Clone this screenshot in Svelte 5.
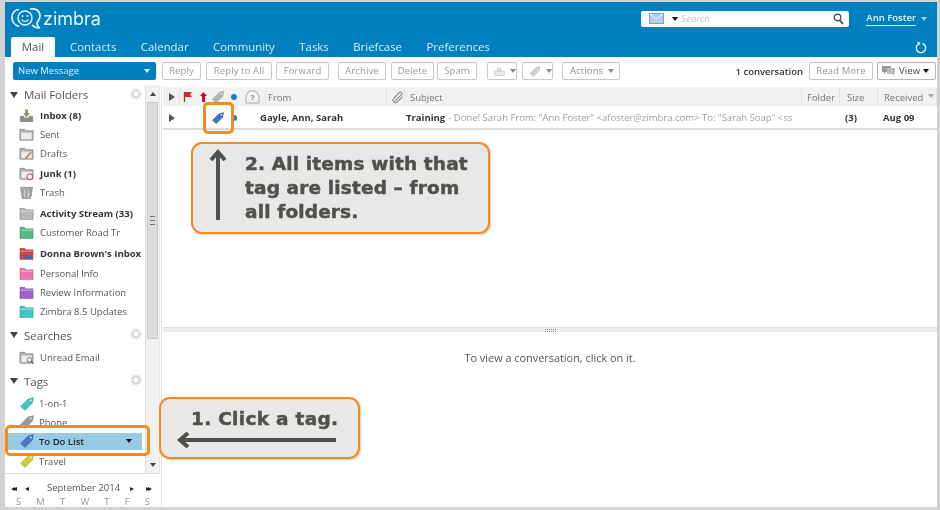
<script>
  const folders = [
    { n: 'Inbox (8)', k: 'inbox', b: true },
    { n: 'Sent', k: 'sent' },
    { n: 'Drafts', k: 'drafts' },
    { n: 'Junk (1)', k: 'junk', b: true },
    { n: 'Trash', k: 'trash' },
    { n: 'Activity Stream (33)', k: 'folder', c: '#b9b9b9', b: true, gap: true },
    { n: 'Customer Road Tr', k: 'folder', c: '#55b98a' },
    { n: "Donna Brown's Inbox", k: 'shared', b: true, gap: true },
    { n: 'Personal Info', k: 'folder', c: '#f070b8' },
    { n: 'Review Information', k: 'folder', c: '#9a62c8' },
    { n: 'Zimbra 8.5 Updates', k: 'folder', c: '#3cc8c8' }
  ];
  const tabs = ['Contacts', 'Calendar', 'Community', 'Tasks', 'Briefcase', 'Preferences'];
  const group1 = [{ t: 'Reply', w: 39, g: 5 }, { t: 'Reply to All', w: 66, g: 4 }, { t: 'Forward', w: 53, g: 9 }];
  const group2 = [{ t: 'Archive', w: 48, g: 5 }, { t: 'Delete', w: 43, g: 3 }, { t: 'Spam', w: 40, g: 10 }];
  const days = ['S', 'M', 'T', 'W', 'T', 'F', 'S'];
</script>

{#snippet tag(color, size = 16)}
  <svg class="ico" width={size} height={size} viewBox="0 0 16 16">
    <path d="M1.500 10.500 9 3l5.500-1.500L13.500 7 6 14.500Z" fill={color} stroke="#00000040" stroke-width=".7" stroke-linejoin="round" />
    <circle cx="11.800" cy="4.300" r=".9" fill="#fff" />
  </svg>
{/snippet}

{#snippet gear()}
  <svg class="gear" width="12" height="12" viewBox="0 0 12 12">
    <circle cx="6" cy="6" r="3.400" fill="none" stroke="#d6d6d6" stroke-width="2" />
    <circle cx="6" cy="6" r="5" fill="none" stroke="#d6d6d6" stroke-width="1.400" stroke-dasharray="1.600 1.600" />
  </svg>
{/snippet}

{#snippet folderIcon(item)}
  <svg class="ico" width="15" height="15" viewBox="0 0 16 16">
    {#if item.k === 'folder' || item.k === 'shared'}
      <path d="M1 2.500h5l1 1.500h8v10.500H1Z" fill={item.k === 'shared' ? '#d8433f' : item.c} stroke="#0000004d" stroke-width=".8" />
      <path d="M1.400 5.500h13.200" stroke="#ffffff80" stroke-width="1" />
      {#if item.k === 'shared'}
        <circle cx="7" cy="11.500" r="2.200" fill="#3a62d0" /><circle cx="12" cy="12" r="2.200" fill="#3a62d0" />
      {/if}
    {:else if item.k === 'inbox'}
      <path d="M1.500 9h3.500l1 2h4l1-2h3.500v5.500H1.500Z" fill="#8c8c8c" stroke="#666" stroke-width=".6" />
      <path d="M6.500 1.500h3v4h2L8 10 4.500 5.500h2Z" fill="#7b9c62" />
    {:else if item.k === 'trash'}
      <path d="M1.500 2.500h13l-2 12h-9Z" fill="#a8a8a8" stroke="#777" stroke-width=".6" />
      <path d="M6 5v8M10 5v8" stroke="#d8d8d8" />
    {:else}
      <path d="M1 2.500h5l1 1.500h8v10H1Z" fill="#b5b5b5" stroke="#777" stroke-width=".7" />
      <path d="M2.500 6h11v7h-11Z" fill="#ededed" />
      {#if item.k === 'drafts'}
        <path d="M6 13l6-7 1.500 1.200-6 7Z" fill="#b49336" />
      {:else if item.k === 'junk'}
        <circle cx="11.500" cy="11.500" r="3" fill="#fff" stroke="#c9565c" stroke-width="1.200" />
      {:else if item.k === 'search'}
        <circle cx="11" cy="10.500" r="2.400" fill="#fff" stroke="#666" /><path d="M13 12.500l2 2" stroke="#555" stroke-width="1.200" />
      {/if}
    {/if}
  </svg>
{/snippet}

<div class="shot">
  <div class="app">
    <header class="top">
      <div class="brand">
        <svg class="logo" width="31" height="21" viewBox="0 0 31 21">
          <circle cx="14" cy="10" r="7" fill="none" stroke="#e8f4fb" stroke-width="1.500" />
          <path d="M8 1.500C4 1.500 1 5 1 9.500s3 8 7 9M19 1c6-1 10 2 10 7 0 3-2 5-3 7 0 2 1 4 3 5-4 0-6-1-8-3" fill="none" stroke="#e8f4fb" stroke-width="1.700" />
          <circle cx="11.500" cy="8" r="1.100" fill="#e8f4fb" /><circle cx="16.500" cy="8" r="1.100" fill="#e8f4fb" />
          <path d="M10.500 11.500c1.500 2.500 5.500 2.500 7 0" fill="none" stroke="#e8f4fb" stroke-width="1.300" />
        </svg>
        <span class="wordmark">zimbra</span>
        <div class="grow"></div>
        <div class="search">
          <svg width="15" height="11" viewBox="0 0 15 11"><rect x=".5" y=".5" width="14" height="10" fill="#b3cdea" stroke="#7f9fc8" /><path d="M1 1l6.500 5L14 1" fill="none" stroke="#fff" /></svg>
          <i class="caret dark"></i>
          <span class="ph">Search</span>
          <div class="grow"></div>
          <svg width="11" height="12" viewBox="0 0 11 12"><circle cx="4.500" cy="4.500" r="3.300" fill="none" stroke="#444" stroke-width="1.300" /><path d="M7 7.500l3 3.500" stroke="#444" stroke-width="1.700" /></svg>
        </div>
        <span class="user">Ann Foster</span>
        <i class="caret light"></i>
      </div>
      <nav class="tabs">
        <span class="tab active">Mail</span>
        {#each tabs as t}<span class="tab">{t}</span>{/each}
        <div class="grow"></div>
        <svg class="refresh" width="12" height="13" viewBox="0 0 12 13"><path d="M7.500 2.500a4.700 4.700 0 1 1-4.200.6" fill="none" stroke="#e8f4fb" stroke-width="1.400" /><path d="M2 .8l3.600.6-1.600 3Z" fill="#e8f4fb" /></svg>
      </nav>
    </header>

    <div class="toolbar">
      <div class="new">New Message<i class="caret light"></i></div>
      {#each group1 as b}<span class="btn text" style="width: {b.w}px; margin-right: {b.g}px">{b.t}</span>{/each}
      {#each group2 as b}<span class="btn text" style="width: {b.w}px; margin-right: {b.g}px">{b.t}</span>{/each}
      <span class="btn icon first">
        <svg width="15" height="13" viewBox="0 0 15 13"><path d="M1 6h13v6H1ZM5 6V2h4l1 4" fill="#eee" stroke="#bbb" /></svg><i class="caret gray"></i>
      </span>
      <span class="btn icon">{@render tag('#cfcfcf', 15)}<i class="caret gray"></i></span>
      <span class="btn actions">Actions<i class="caret gray"></i></span>
      <div class="grow"></div>
      <span class="count">1 conversation</span>
      <span class="btn more">Read More</span>
      <span class="btn view">
        <svg width="15" height="12" viewBox="0 0 15 12"><path d="M1 1h9v6H5L3 9V7H1Z" fill="#999" /><path d="M6 3h8v6h-1v2l-2-2H6Z" fill="#bbb" /></svg>
        <span>View</span><i class="caret dark"></i>
      </span>
    </div>

    <div class="main">
      <aside class="side">
        <div class="tree">
          <div class="scrollarea">
            <div class="sec first"><i class="tri"></i>Mail Folders{@render gear()}</div>
            <div class="rows">
              {#each folders as f}
                <div class="row" class:gap={f.gap} class:bold={f.b}>{@render folderIcon(f)}<span>{f.n}</span></div>
              {/each}
            </div>
            <div class="sec s-search"><i class="tri"></i>Searches{@render gear()}</div>
            <div class="row unread">{@render folderIcon({ k: 'search' })}<span>Unread Email</span></div>
            <div class="sec s-tags"><i class="tri"></i>Tags{@render gear()}</div>
            <div class="row tight tagrow">{@render tag('#3fc4c4')}<span>1-on-1</span></div>
            <div class="row tagrow phone">{@render tag('#9a9a9a')}<span>Phone</span></div>
            <div class="row tagrow sel">{@render tag('#4a78c8')}<span>To Do List</span><i class="caret dark"></i></div>
            <div class="row tagrow">{@render tag('#cfcf3c')}<span>Travel</span></div>
          </div>
          <div class="vbar">
            <div class="arrow up"></div>
            <div class="thumb"><b></b></div>
            <div class="grow"></div>
            <div class="arrow down"></div>
          </div>
        </div>
        <div class="cal">
          <div class="month">
            <span class="nav n1">◂◂</span><span class="nav n2">◂</span>
            <span class="mname">September 2014</span>
            <span class="nav n3">▸</span><span class="nav n4">▸▸</span>
          </div>
          <div class="days">{#each days as d}<span>{d}</span>{/each}</div>
        </div>
      </aside>

      <section class="content">
        <div class="list">
          <div class="thead">
            <span class="c c-exp"><i class="tri right"></i></span>
            <span class="c c-flag">
              <svg width="10" height="12" viewBox="0 0 10 12"><path d="M1.500 1v10" stroke="#b22" stroke-width="1.300" /><path d="M2 1h7L7 3.500 9 6H2Z" fill="#d4282c" /></svg>
            </span>
            <span class="c c-pri">
              <svg width="7" height="10" viewBox="0 0 7 10"><path d="M3.500 0 7 4H5v6H2V4H0Z" fill="#c8102e" /></svg>
            </span>
            <span class="c c-tag">{@render tag('#b5b5b5', 14)}</span>
            <span class="c c-dot"><i class="dot"></i></span>
            <span class="c c-stat">
              <svg width="15" height="14" viewBox="0 0 15 14"><path d="M1 6l3-5h7l3 5v7H1Z" fill="#f4f4f4" stroke="#aaa" /><text x="7.500" y="10" text-anchor="middle" font-size="8" font-family="Liberation Sans" font-weight="700" fill="#888">?</text></svg>
            </span>
            <span class="c c-from">From</span>
            <span class="c c-att">
              <svg width="12" height="13" viewBox="0 0 13 13"><path d="M3 10.500 10.500 3.200a1.700 1.700 0 0 0-2.500-2.200L1.800 7.500a2.700 2.700 0 0 0 3.800 3.800L11.500 5.500" fill="none" stroke="#8d8d8d" stroke-width="1.300" /></svg>
            </span>
            <span class="c c-subj">Subject</span>
            <span class="c c-folder">Folder</span>
            <span class="c c-size">Size</span>
            <span class="c c-recv">Received<i class="sort"></i></span>
          </div>
          <div class="trow">
            <span class="c c-exp"><i class="tri right"></i></span>
            <span class="c c-flag"></span>
            <span class="c c-pri"></span>
            <span class="c c-tag">{@render tag('#3f73c8', 14)}</span>
            <span class="c c-dot"><i class="dot"></i></span>
            <span class="c c-stat"></span>
            <span class="c c-from strong">Gayle, Ann, Sarah</span>
            <span class="c c-att"></span>
            <span class="c c-subj msg"><b>Training</b> <em>- Done! Sarah From: "Ann Foster" &lt;afoster@zimbra.com&gt; To: "Sarah Soap" &lt;ss</em></span>
            <span class="c c-folder"></span>
            <span class="c c-size strong">(3)</span>
            <span class="c c-recv strong">Aug 09</span>
          </div>
        </div>
        <div class="sash"><span></span></div>
        <div class="reading">To view a conversation, click on it.</div>
      </section>
    </div>
  </div>

  <div class="hl hl-tag"></div>
  <div class="hl hl-side"></div>

  <div class="callout c-two">
    <svg class="up-arrow" width="18" height="74" viewBox="0 0 18 74"><path d="M9 5v67" fill="none" stroke="#50524a" stroke-width="4" /><path d="M2 12 9 4l7 8" fill="none" stroke="#50524a" stroke-width="4" /></svg>
    <p>2. All items with that tag are listed – from all folders.</p>
  </div>

  <div class="callout c-one">
    <p>1. Click a tag.</p>
    <svg class="left-arrow" width="162" height="18" viewBox="0 0 162 18"><path d="M160 9H5" fill="none" stroke="#50524a" stroke-width="4" /><path d="M12 2 4 9l8 7" fill="none" stroke="#50524a" stroke-width="4" /></svg>
  </div>
</div>

<style>
  :global(body) { margin: 0; background: #fff; }
  .shot { position: relative; width: 940px; height: 510px; overflow: hidden; background: #d2d2d2; padding: 2px 3px 3px 5px; box-sizing: border-box; font-family: "Open Sans", "Noto Sans", sans-serif; font-size: 10px; color: #444; filter: blur(.3px); }
  .app { height: 100%; background: #fff; display: flex; flex-direction: column; }
  .grow { flex: 1; }
  i { display: inline-block; font-style: normal; }

  .top { height: 55px; background: #0080bf; color: #dff0fa; flex: none; display: flex; flex-direction: column; }
  .brand { height: 35px; display: flex; align-items: center; padding-right: 10px; }
  .logo { margin: 0 0 2px 6px; }
  .wordmark { font: 400 18px/1 "Inter", "Noto Sans", sans-serif; color: #e8f4fb; margin: 0 0 2px 1px; }
  .search { width: 208px; height: 16px; background: #fff; border-radius: 2px; display: flex; align-items: center; padding: 0 5px 0 8px; margin-top: -2px; box-sizing: border-box; }
  .search svg:first-child { margin-right: 3px; }
  .ph { font: italic 9.500px "Open Sans", sans-serif; color: #c2c2c2; margin-left: 3px; }
  .user { color: #e8f4fb; font-size: 9.500px; font-weight: 600; border-bottom: 1px solid #cfe8f6; margin: -2px 0 0 17px; padding-bottom: 1px; line-height: 13px; }
  .caret { width: 0; height: 0; border-left: 3.500px solid transparent; border-right: 3.500px solid transparent; border-top: 4px solid #222; margin-left: 5px; }
  .caret.light { border-top-color: #e8f4fb; }
  .brand > .caret { margin-top: -2px; border-top-color: #a8d4ec; }
  .caret.gray { border-top-color: #888; }
  .caret.dark { border-top-color: #111; }

  .tabs { height: 20px; display: flex; align-items: flex-end; padding: 0 10px 0 6px; }
  .tab { font-size: 11.400px; line-height: 20px; color: #d5ecf8; margin-right: 24.500px; white-space: nowrap; }
  .tab.active { background: #fff; color: #555; width: 44px; text-align: center; margin-right: 15px; border-radius: 2px 2px 0 0; }
  .refresh { align-self: center; }

  .toolbar { height: 28px; flex: none; display: flex; align-items: center; padding: 0 1px 0 8px; box-sizing: border-box; }
  .new { width: 143px; height: 18px; background: #0080bf; color: #dff0fa; border-radius: 2px; box-sizing: border-box; padding: 0 6px 0 5px; line-height: 18px; font-size: 9.500px; display: flex; justify-content: space-between; align-items: center; margin-right: 6px; }
  .btn { height: 18px; box-sizing: border-box; border: 1px solid #c8c8c8; border-radius: 2px; line-height: 16px; font-size: 9.500px; letter-spacing: .12px; color: #9a9a9a; white-space: nowrap; display: inline-flex; align-items: center; background: #fff; flex: none; }
  .text { justify-content: center; }
  .icon { width: 31px; padding: 0 0 0 6px; margin-right: 5px; }
  .icon.first { width: 30px; }
  .icon + .actions { margin-left: 4px; }
  .actions { width: 58px; padding-left: 7px; color: #8f8f8f; }
  .count { color: #333; font-weight: 600; font-size: 9.500px; margin-right: 6px; }
  .more { width: 64px; justify-content: center; margin-right: 4px; padding: 0; }
  .view { width: 59px; color: #444; padding: 0 3px 0 3px; justify-content: space-between; border-color: #b5b5b5; }
  .view i { margin: 0 3px 0 0; }

  .main { flex: 1; display: flex; min-height: 0; }
  .side { width: 156px; flex: none; display: flex; flex-direction: column; border-right: 1px solid #e4e4e4; }
  .tree { height: 388px; flex: none; display: flex; overflow: hidden; border-bottom: 1px solid #ddd; margin-right: 1px; }
  .scrollarea { width: 140px; flex: none; border-right: 1px solid #ddd; }
  .sec { height: 20px; display: flex; align-items: center; color: #555; font-size: 11.600px; margin-top: 3px; padding-left: 5px; position: relative; letter-spacing: -.1px; }
  .sec.first { margin-top: 0; height: 19px; }
  .s-search { margin-top: 4px; }
  .s-tags { margin-top: 4px; }
  .rows { padding-top: 2px; }
  .gear { position: absolute; right: 3px; top: 3px; }
  .tri { width: 0; height: 0; border-left: 4px solid transparent; border-right: 4px solid transparent; border-top: 6px solid #444; margin-right: 6px; }
  .tri.right { border-top: 4px solid transparent; border-bottom: 4px solid transparent; border-left: 6px solid #555; border-right: none; margin: 0; }
  .row { height: 19.200px; display: flex; align-items: center; padding-left: 14px; font-size: 9.500px; color: #555; white-space: nowrap; box-sizing: border-box; }
  .row .ico { margin-right: 6px; flex: none; }
  .row.bold { color: #333; font-weight: 700; }
  .row.gap { margin-top: 2px; }
  .row.tight { margin-top: 3px; }
  .row.unread { margin-top: 3px; }
  .tagrow { padding-left: 14px; }
  .tagrow .ico { margin-right: 4px; }
  .phone { margin-top: -1px; }
  .sel { background: #97cbe4; color: #222; font-weight: 600; height: 17px; margin: 1px 3px 2px 3px; padding: 0 10px 0 11px; }
  .sel span { flex: 1; }
  .vbar { flex: 1; background: #f1f1f1; display: flex; flex-direction: column; align-items: center; border-right: 1px solid #e8e8e8; }
  .arrow { width: 100%; height: 17px; display: flex; align-items: center; justify-content: center; }
  .arrow::after { content: ""; border-left: 3.500px solid transparent; border-right: 3.500px solid transparent; }
  .up::after { border-bottom: 4px solid #444; }
  .down::after { border-top: 4px solid #444; }
  .thumb { width: 11px; height: 237px; background: #dcdcdc; border: 1px solid #c6c6c6; box-sizing: border-box; display: flex; align-items: center; justify-content: center; }
  .thumb b { width: 5px; height: 7px; border-top: 1px solid #777; border-bottom: 1px solid #777; background: linear-gradient(#777, #777) center / 100% 1px no-repeat; }

  .cal { flex: 1; padding: 7px 0 0 4px; color: #777; }
  .month { display: flex; align-items: center; height: 12px; color: #555; font-size: 9.500px; }
  .nav { font-size: 8px; color: #222; letter-spacing: -2px; }
  .n1 { margin-left: 2px; width: 14px; }
  .n2 { width: 22px; }
  .mname { width: 83px; }
  .n3 { width: 16px; }
  .days { display: flex; justify-content: space-between; margin-top: 2px; padding: 0 11px 0 7px; color: #999; font-size: 9.500px; }

  .content { flex: 1; min-width: 0; display: flex; flex-direction: column; padding: 2px 0 0 1px; }
  .list { height: 240px; flex: none; }
  .thead, .trow { display: flex; align-items: center; }
  .thead { height: 19px; background: #f1f1f1; color: #777; font-size: 9.500px; padding-top: 1px; box-sizing: border-box; }
  .trow { height: 24px; padding-top: 1px; border-bottom: 2px solid #dcdcdc; font-size: 9.500px; color: #444; box-sizing: border-box; }
  .c { display: flex; align-items: center; box-sizing: border-box; height: 100%; flex: none; white-space: nowrap; overflow: hidden; }
  .thead .c { border-right: 1px solid #e2e2e2; }
  .thead .c-flag, .thead .c-pri, .thead .c-tag, .thead .c-dot { border-right: none; }
  .c-exp { width: 17px; padding-left: 6px; }
  .c-flag { width: 18px; padding-left: 3px; }
  .c-pri { width: 11px; padding-left: 2px; }
  .c-tag { width: 19px; padding-left: 2px; }
  .c-dot { width: 13px; padding-left: 3px; }
  .c-stat { width: 25px; padding-left: 4px; }
  .c-from { width: 121px; padding-left: 2px; }
  .trow .c-from { padding-left: 0; margin-left: -6px; width: 127px; }
  .c-att { width: 18px; padding-left: 5px; }
  .c-subj { width: 397px; padding-left: 5px; }
  .trow .c-subj { padding-left: 1px; }
  .c-folder { width: 38px; padding-left: 5px; }
  .c-size { width: 38px; padding-left: 7px; }
  .trow .c-size { padding-left: 5px; }
  .c-recv { flex: 1; padding-left: 6px; position: relative; }
  .trow .c-recv { padding-left: 5px; }
  .dot { width: 6px; height: 6px; border-radius: 50%; background: #0a84c8; }
  .sort { position: absolute; right: 2px; top: 6px; border-left: 3px solid transparent; border-right: 3px solid transparent; border-top: 4px solid #aaa; }
  .strong { font-weight: 700; color: #333; }
  .msg b { color: #333; font-weight: 700; margin-right: 3px; }
  .msg em { font-style: normal; color: #a0a0a0; }
  .sash { height: 5px; background: #ececec; border-top: 1px solid #ddd; display: flex; justify-content: center; align-items: center; box-sizing: border-box; }
  .sash span { width: 11px; height: 3px; border-top: 1px dotted #888; border-bottom: 1px dotted #888; box-sizing: border-box; }
  .reading { text-align: center; padding-top: 18px; color: #555; font-size: 10.900px; }

  .hl { position: absolute; border: 3px solid #f58a1f; box-sizing: border-box; border-radius: 5px; }
  .hl-tag { left: 203px; top: 102px; width: 31px; height: 32px; }
  .hl-side { left: 5px; top: 425px; width: 145px; height: 31px; }
  .callout { position: absolute; box-sizing: border-box; background: #e8e8e8; border: 2.500px solid #f58a1f; border-radius: 11px; box-shadow: 1px 1px 2px #0003; color: #50524a; font-family: "DejaVu Sans", sans-serif; font-weight: 700; }
  .callout p { margin: 0; -webkit-text-stroke: .5px #50524a; }
  .c-two { left: 191px; top: 142px; width: 299px; height: 92px; font-size: 18.500px; line-height: 24px; }
  .c-two p { position: absolute; left: 52px; top: 8px; width: 232px; letter-spacing: .15px; }
  .up-arrow { position: absolute; left: 16px; top: 4px; }
  .c-one { left: 159px; top: 397px; width: 201px; height: 62px; font-size: 18.500px; line-height: 22px; }
  .c-one p { position: absolute; left: 30px; top: 9px; white-space: nowrap; letter-spacing: .3px; }
  .left-arrow { position: absolute; left: 15px; top: 32px; }
</style>
